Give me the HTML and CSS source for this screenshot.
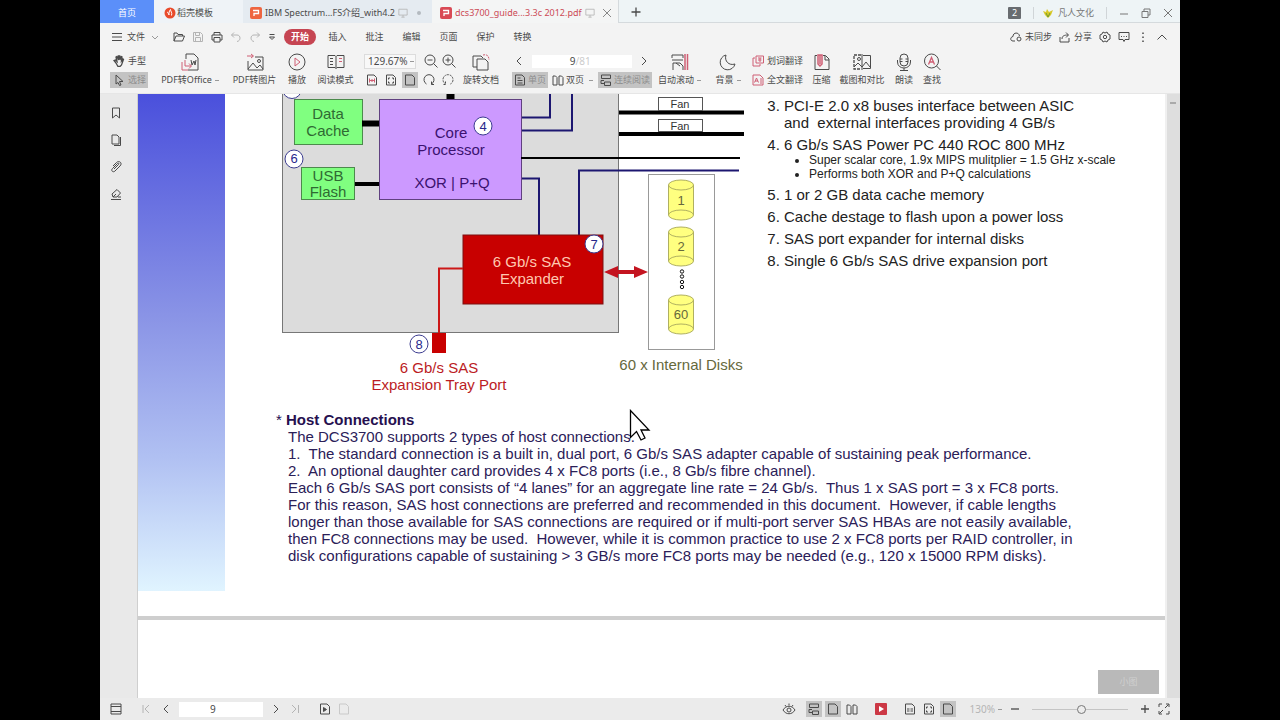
FILE: index.html
```html
<!DOCTYPE html>
<html lang="zh-CN">
<head>
<meta charset="utf-8">
<title>dcs3700_guide PDF</title>
<link rel="stylesheet" href="styles.css">
</head>
<body>
<svg width="0" height="0" class="defs" aria-hidden="true">
  <symbol id="doc" viewBox="0 0 12 12"><path d="M1.500 1h6.500l2.500 2.500v7.500h-9z"/></symbol>
  <symbol id="fit" viewBox="0 0 12 12"><path d="M1.500 1h6.500l2.500 2.500v7.500h-9z"/><path class="accent" d="M3.500 4.500v4M8.500 4.500v4M3.500 6.500h5M6 5v3"/></symbol>
  <symbol id="fitp" viewBox="0 0 12 12"><path d="M1.500 1h6.500l2.500 2.500v7.500h-9zM3.500 5.500v-1.500h1.500M8.500 7.500v1.500h-1.500M7 4h1.500v1.500M3.500 7.500v1.500h1.500"/></symbol>
  <symbol id="cw" viewBox="0 0 12 12"><path d="M3.500 10a5 5 0 1 1 5 0M8.500 7.500v3h2.500"/></symbol>
  <symbol id="ccw" viewBox="0 0 12 12"><path stroke-dasharray="2 1" d="M8.500 10a5 5 0 1 0-5 0M3.500 7.500v3h-2.500"/></symbol>
  <symbol id="book" viewBox="0 0 12 12"><path d="M1 2h2.500l1.500 1.500v7.500h-4zM7 2h2.500l1.500 1.500v7.500h-4z"/></symbol>
  <symbol id="cont" viewBox="0 0 12 12"><path d="M1.500 1h9v3.500h-9zM4 6.500H1v3h3M4.500 8h6v3.500h-6z"/></symbol>
  <symbol id="left" viewBox="0 0 8 12"><path d="M6 2 2 6l4 4"/></symbol>
  <symbol id="right" viewBox="0 0 8 12"><path d="m2 2 4 4-4 4"/></symbol>
  <symbol id="monitor" viewBox="0 0 12 12"><path d="M1 1.500h10v7H1zM4 11h4M6 8.500V11"/></symbol>
  <symbol id="pdf" viewBox="0 0 12 12"><rect width="12" height="12" rx="2" fill="currentColor" stroke="none"/><path stroke="#fff" stroke-width="1.300" d="M3 3.500h5.500v3H4v2.500"/></symbol>
</svg>
<div class="app">
  <header class="titlebar">
    <nav class="tabs">
      <button class="tab home">首页</button>
      <button class="tab docer"><svg class="i12" viewBox="0 0 12 12"><circle cx="6" cy="6" r="5.500" fill="#e94b2b" stroke="none"/><path d="M3 5c1 0 1.500 2 2 3 0-2 0-4 1.500-5.500 0 2 2 3 1 6" stroke="#fff"/></svg>稻壳模板</button>
      <button class="tab ibm"><svg class="i12 orange"><use href="#pdf"/></svg><span>IBM Spectrum...FS介绍_with4.2</span><svg class="i10 pale"><use href="#monitor"/></svg><i class="dot"></i></button>
      <button class="tab active"><svg class="i12 red"><use href="#pdf"/></svg><span>dcs3700_guide...3.3c 2012.pdf</span><svg class="i10 pale"><use href="#monitor"/></svg><svg class="i10 close" viewBox="0 0 10 10"><path d="m1 1 8 8M9 1 1 9"/></svg></button>
      <button class="plus" aria-label="新建"><svg class="i12" viewBox="0 0 12 12"><path stroke-width="1.300" d="M6 1.500v9M1.500 6h9"/></svg></button>
    </nav>
    <div class="window">
      <span class="badge">2</span><i class="sep"></i>
      <svg class="i12 crown" viewBox="0 0 12 12"><path d="m1 4 3 1 1-3 2 3 4-2-2 5-3 3-3-3z" fill="#d9c928" stroke="none"/><path d="m4 6 2 4 2-4" stroke="#6d9b35"/></svg>
      <span class="user">凡人文化</span><i class="sep"></i>
      <button aria-label="最小化"><svg class="i10" viewBox="0 0 10 10"><path d="M1 6h8"/></svg></button>
      <button aria-label="还原"><svg class="i10" viewBox="0 0 10 10"><path d="M1 3.500h6v6H1zM3 3.500V1h6v6H7"/></svg></button>
      <button aria-label="关闭"><svg class="i10" viewBox="0 0 10 10"><path d="m1 1 8 8M9 1 1 9"/></svg></button>
    </div>
  </header>

  <div class="menubar">
    <button class="file"><svg class="i12" viewBox="0 0 12 12"><path d="M1 2.500h10M1 6h10M1 9.500h10"/></svg>文件<svg class="i8" viewBox="0 0 8 8"><path d="m1 3 3 3 3-3"/></svg></button>
    <div class="quick">
      <button aria-label="打开"><svg class="i12" viewBox="0 0 12 12"><path d="M1 10V2h3l1 1.500h4.500V5M1 10l2-5h8.500l-2 5z"/></svg></button>
      <button aria-label="保存" class="pale"><svg class="i12" viewBox="0 0 12 12"><path d="M1.500 1.500h7l2 2v7h-9zM3.500 1.500v3h4v-3M3.500 10.500v-4h5v4"/></svg></button>
      <button aria-label="打印"><svg class="i12" viewBox="0 0 12 12"><path d="M3 4V1.500h6V4M3 9H1V4h10v5H9M3 6.500h6v4.500H3z"/></svg></button>
      <button aria-label="撤销" class="pale"><svg class="i12" viewBox="0 0 12 12"><path d="M4 1.500 1.500 4 4 6.500M1.500 4H7c4 0 4 6 0 6.500"/></svg></button>
      <button aria-label="重做" class="pale"><svg class="i12" viewBox="0 0 12 12"><path d="M8 1.500 10.500 4 8 6.500M10.500 4H5c-4 0-4 6 0 6.500"/></svg></button>
      <button aria-label="更多"><svg class="i8" viewBox="0 0 8 8"><path d="M1.500 1.500h5M1.500 4 4 6.500 6.500 4z"/></svg></button>
    </div>
    <nav class="menus">
      <button class="current">开始</button><button>插入</button><button>批注</button><button>编辑</button><button>页面</button><button>保护</button><button>转换</button>
    </nav>
    <div class="actions">
      <button><svg class="i12" viewBox="0 0 12 12"><path d="M5 10H3c-3 0-3-4 0-4.500C3 1 9 1 9.500 5M7 8a2 2 0 1 1 4 0 2 2 0 0 1-4 0"/></svg>未同步</button>
      <button><svg class="i12" viewBox="0 0 12 12"><path d="M1 6v5h9V7M3 8c0-3 2-4 6-4M7 1.500 9.500 4 7 6.500"/></svg>分享</button>
      <button aria-label="设置"><svg class="i12" viewBox="0 0 12 12"><path d="m4 1 2 1 2-1 1 2 2 1v4L9 9l-1 2-2-1-2 1-1-2-2-1V4l2-1z"/><circle cx="6" cy="6" r="1.700"/></svg></button>
      <button aria-label="反馈"><svg class="i12" viewBox="0 0 12 12"><path d="M1 1.500h10v7H7l-1 2-1-2H1zM3 5.500h1M5.500 5.500h1M8 5.500h1"/></svg></button>
      <button aria-label="菜单"><svg class="i12" viewBox="0 0 12 12"><path stroke-width="1.500" d="M6 1.500V3M6 5.500V7M6 9.500V11"/></svg></button>
      <button aria-label="收起"><svg class="i12" viewBox="0 0 12 12"><path d="m1.500 8.500 4.500-4.500 4.500 4.500"/></svg></button>
    </div>
  </div>

  <div class="toolbar">
    <div class="group modes">
      <button class="mini"><svg class="i12" viewBox="0 0 12 12"><path stroke-width="1.300" d="M3 8 1 5.500 2.500 5 4 6.500 3 2l1-.5L5.500 5V1h1l.5 4 1-3.500 1 .5-.5 4 1.500-2 .5.500-2 5.500-1.500 1.500H5z"/></svg>手型</button>
      <button class="mini on"><svg class="i12" viewBox="0 0 12 12"><path d="m3 1 7 6.500H6.500L8 11l-1.500.5L5 8.500 3 10z"/></svg><span class="dim">选择</span></button>
    </div>
    <button class="tool w64"><svg class="i18" viewBox="0 0 18 18"><path d="M5 6V1h8l4 4v12H7M10 7l1 5 2-4 1 4 1-5"/><path class="accent" d="M4 7v6h6M8 10.500l2.500 2.500L8 15.500M1 9v8h6"/></svg><span>PDF转Office<b></b></span></button>
    <button class="tool w65"><svg class="i18" viewBox="0 0 18 18"><path d="M9 4h8v13H2V8M2 16l5-6 4 5 3-3 3 4"/><circle cx="13" cy="8" r="1.500"/><path class="accent" d="M1 3h6M5 1l2.500 2L5 5"/></svg><span>PDF转图片</span></button>
    <button class="tool w20"><svg class="i18" viewBox="0 0 18 18"><circle cx="9" cy="9" r="8"/><path class="accent" d="m7 5 5 4-5 4z"/></svg><span>播放</span></button>
    <button class="tool w57"><svg class="i18" viewBox="0 0 18 18"><path d="M1 2.500h7l1 1 1-1h7v12h-7l-1 1-1-1H1zM9 3.500v12M3 5.500h3M3 8.500h3M3 11.500h3"/><path class="accent" d="M12 5.500h3M12 8.500h3"/></svg><span>阅读模式</span></button>
    <div class="group zoom">
      <div class="line">
        <select class="ratio" aria-label="缩放"><option>129.67%</option></select>
        <button aria-label="缩小"><svg class="i14" viewBox="0 0 14 14"><circle cx="6" cy="6" r="5"/><path d="M3.500 6h5M9.500 9.500 13.500 13.500"/></svg></button>
        <button aria-label="放大"><svg class="i14" viewBox="0 0 14 14"><circle cx="6" cy="6" r="5"/><path d="M3.500 6h5M6 3.500v5M9.500 9.500 13.500 13.500"/></svg></button>
      </div>
      <div class="line icons">
        <button aria-label="实际大小"><svg class="i12"><use href="#fit"/></svg></button>
        <button aria-label="适合页面"><svg class="i12"><use href="#fitp"/></svg></button>
        <button aria-label="适合宽度" class="on"><svg class="i12"><use href="#doc"/></svg></button>
        <button aria-label="顺时针"><svg class="i12"><use href="#cw"/></svg></button>
        <button aria-label="逆时针"><svg class="i12"><use href="#ccw"/></svg></button>
      </div>
    </div>
    <button class="tool w50"><svg class="i18" viewBox="0 0 18 18"><path d="M1 14V3h8l2 2M1 14h4M5 6h8l3 3v8H5z"/><path class="accent" stroke-dasharray="2 1" d="M11 2c4-1 6 1 6 5"/></svg><span>旋转文档</span></button>
    <div class="group pages">
      <div class="line pager">
        <button aria-label="上一页"><svg class="i12"><use href="#left"/></svg></button>
        <label class="pagebox"><input aria-label="页码" value="9"><span>/81</span></label>
        <button aria-label="下一页"><svg class="i12"><use href="#right"/></svg></button>
      </div>
      <div class="line views">
        <button class="mini on"><svg class="i12" viewBox="0 0 12 12"><path d="M1.500 1h6.500l2.500 2.500v7.500h-9zM3.500 4h3M3.500 6.500h5M3.500 9h5"/></svg><span class="dim">单页</span></button>
        <button class="mini"><svg class="i12"><use href="#book"/></svg>双页<b></b></button>
        <button class="mini on"><svg class="i12"><use href="#cont"/></svg><span class="dim">连续阅读</span></button>
      </div>
    </div>
    <button class="tool w55"><svg class="i18" viewBox="0 0 18 18"><path d="M1 5V2h11v3M1 7h11M2 17V10h7l3 3v4M5 10l4 3"/><path class="accent" stroke-width="1.500" d="M14 1v16M16.500 1v16"/></svg><span>自动滚动<b></b></span></button>
    <button class="tool w42"><svg class="i18" viewBox="0 0 18 18"><path d="M7 2a7.500 7.500 0 1 0 9 9C10 13 5 8 7 2z"/></svg><span>背景<b></b></span></button>
    <div class="group translate">
      <button class="mini"><svg class="i12 accent" viewBox="0 0 12 12"><path d="M3 3H1v8h7V9M4 1h7.500v7H4zM6 3h3.500M6 5h3.500M8 3v4"/></svg>划词翻译</button>
      <button class="mini"><svg class="i12 accent" viewBox="0 0 12 12"><path d="M1 1h7l3 3v7H1zM2.500 8.500 4.500 4l2 4.500M3 7h3M8 5h2M8 7h2M8 9h2"/></svg>全文翻译</button>
    </div>
    <button class="tool w31"><svg class="i18" viewBox="0 0 18 18"><path d="M4 2.500H2v14h14V6l-3.500-3.500H10M12 3v4h4"/><path class="accent" stroke-width="1.500" d="M5 2h4v9l-2 2-2-2zM7 2v9"/></svg><span>压缩</span></button>
    <button class="tool w50"><svg class="i18" viewBox="0 0 18 18"><path stroke-width="1.300" stroke-dasharray="3 1" d="M8 2H1v14h7"/><path d="M10 2.500h7.500v13H10M9 1v16M1 14l4-4 4 4 4-5 4 5"/><circle cx="6" cy="6" r="1.500"/></svg><span>截图和对比</span></button>
    <button class="tool w34"><svg class="i18" viewBox="0 0 18 18"><rect x="5" y="1" width="8" height="12" rx="4"/><path d="M2.500 7v2c0 8 13 8 13 0V7M9 15v2.500M5 17.500h8M5 6h2.500M10.500 6H13M5 8.500h2.500M10.500 8.500H13"/></svg><span>朗读</span></button>
    <button class="tool w22"><svg class="i18" viewBox="0 0 18 18"><circle cx="8.500" cy="8" r="7"/><path d="m13.500 13 4 4"/><path class="accent" stroke-width="1.300" d="m5.500 11.500 3-7 3 7M6.500 9h4"/></svg><span>查找</span></button>
  </div>

  <div class="workspace">
    <aside class="sidebar">
      <button aria-label="书签"><svg class="i12" viewBox="0 0 12 12"><path d="M2.500 1h7v10L6 8l-3.500 3z"/></svg></button>
      <button aria-label="缩略图"><svg class="i12" viewBox="0 0 12 12"><path d="M2 1h5l2 2v7H2zM10.500 3v8.500H4"/></svg></button>
      <button aria-label="附件"><svg class="i12" viewBox="0 0 12 12"><path d="m4 8 4.500-4.500c1-1 0-2-1-1L2.500 7.500c-2 2 .500 4.500 2.500 2.500L10 5c3-3-1-6-3.500-3.500L3 5"/></svg></button>
      <button aria-label="签名"><svg class="i12" viewBox="0 0 12 12"><path d="M1 11.500h10M3 9l-1-3 5-4.500 3.500 3.500L7 9zM3 9l3-3M8 9h3"/></svg></button>
    </aside>
    <main class="viewer">
      <article class="page">
        <div class="band"></div>
        <div class="body">
          <div class="upper">
            <svg class="diagram" viewBox="276 94 480 312" role="img" aria-label="Controller block diagram">
              <rect x="282.500" y="80" width="336" height="252.500" fill="#dcdcdc" stroke="#777"/>
              <g class="tag"><circle cx="292" cy="89" r="9.500"/><circle cx="294" cy="159" r="9"/><text x="294" y="163">6</text></g>
              <g fill="#80ff80" stroke="#4c8a4c"><rect x="294.500" y="99.500" width="68" height="45"/><rect x="301.500" y="167.500" width="53" height="32"/></g>
              <path d="M362 123.500h17" stroke="#000" stroke-width="6"/><path d="M355 184h24" stroke="#000" stroke-width="4"/><path d="M450.500 94v6" stroke="#000" stroke-width="8"/>
              <rect x="379.500" y="99.500" width="142" height="100" fill="#cc99ff" stroke="#604080"/>
              <g class="label green"><text x="328" y="119">Data</text><text x="328" y="136">Cache</text><text x="328" y="181">USB</text><text x="328" y="197">Flash</text></g>
              <g class="label purple"><text x="451" y="138">Core</text><text x="451" y="155">Processor</text><text x="452" y="188">XOR | P+Q</text></g>
              <g class="wire"><path d="M522 117.500h28V94M522 130.500h50V94M522 178.500h17V236M579 236v-65.500h160"/></g>
              <path d="M521 158h219" stroke="#000" stroke-width="2"/>
              <path d="M619 112.500h125M619 134h125" stroke="#000" stroke-width="4"/>
              <g fill="#fff" stroke="#555"><rect x="658.500" y="97.500" width="44" height="13"/><rect x="658.500" y="119.500" width="44" height="12"/></g>
              <g class="fan"><text x="680" y="108">Fan</text><text x="680" y="130">Fan</text></g>
              <rect x="463" y="235" width="140" height="69" fill="#c80000" stroke="#7c1010"/>
              <g class="label cream"><text x="532" y="267">6 Gb/s SAS</text><text x="532" y="284">Expander</text></g>
              <path d="M463 268.500h-24V334" stroke="#cc1818" stroke-width="2"/>
              <rect x="432" y="333" width="14" height="20" fill="#c80000"/>
              <g class="tag"><circle cx="483" cy="126" r="9"/><text x="483" y="131">4</text><circle cx="594" cy="244" r="9"/><text x="594" y="249">7</text><circle cx="419" cy="344" r="9"/><text x="419" y="349">8</text></g>
              <path d="M604 272l14-6v4h16v-4l14 6-14 6v-4h-16v4z" fill="#c41420"/>
              <rect x="648.500" y="174.500" width="66" height="175" fill="#fff" stroke="#999"/>
              <g class="disk">
                <path d="M668.500 185v30a12.500 5 0 0 0 25 0v-30a12.500 5 0 0 0-25 0a12.500 5 0 0 0 25 0M693.500 215a12.500 5 0 0 0-25 0"/>
                <path d="M668.500 232v29a12.500 5 0 0 0 25 0v-29a12.500 5 0 0 0-25 0a12.500 5 0 0 0 25 0M693.500 261a12.500 5 0 0 0-25 0"/>
                <path d="M668.500 300v29a12.500 5 0 0 0 25 0v-29a12.500 5 0 0 0-25 0a12.500 5 0 0 0 25 0M693.500 329a12.500 5 0 0 0-25 0"/>
                <text x="681" y="205">1</text><text x="681" y="251">2</text><text x="681" y="319">60</text>
              </g>
              <g fill="#fff" stroke="#111"><circle cx="682" cy="271.500" r="1.700"/><circle cx="682" cy="276.500" r="1.700"/><circle cx="682" cy="282" r="1.700"/><circle cx="682" cy="287" r="1.700"/></g>
              <g class="label redtext"><text x="439" y="373">6 Gb/s SAS</text><text x="439" y="390">Expansion Tray Port</text></g>
              <text class="label olive" x="681" y="370">60 x Internal Disks</text>
            </svg>
            <ol class="facts" start="3">
              <li>PCI-E 2.0 x8 buses interface between ASIC<br>and&nbsp; external interfaces providing 4 GB/s</li>
              <li>6 Gb/s SAS Power PC 440 ROC 800 MHz
                <ul><li>Super scalar core, 1.9x MIPS mulitplier = 1.5 GHz x-scale</li><li>Performs both XOR and P+Q calculations</li></ul></li>
              <li>1 or 2 GB data cache memory</li>
              <li>Cache destage to flash upon a power loss</li>
              <li>SAS port expander for internal disks</li>
              <li>Single 6 Gb/s SAS drive expansion port</li>
            </ol>
          </div>
          <section class="notes">
            <h2><span>*</span> Host Connections</h2>
            <p>The DCS3700 supports 2 types of host connections.<br>
            1.&nbsp; The standard connection is a built in, dual port, 6 Gb/s SAS adapter capable of sustaining peak performance.<br>
            2.&nbsp; An optional daughter card provides 4 x FC8 ports (i.e., 8 Gb/s fibre channel).<br>
            Each 6 Gb/s SAS port consists of “4 lanes” for an aggregate line rate = 24 Gb/s.&nbsp; Thus 1 x SAS port = 3 x FC8 ports.<br>
            For this reason, SAS host connections are preferred and recommended in this document.&nbsp; However, if cable lengths<br>
            longer than those available for SAS connections are required or if multi-port server SAS HBAs are not easily available,<br>
            then FC8 connections may be used.&nbsp; However, while it is common practice to use 2 x FC8 ports per RAID controller, in<br>
            disk configurations capable of sustaining &gt; 3 GB/s more FC8 ports may be needed (e.g., 120 x 15000 RPM disks).</p>
          </section>
        </div>
        <svg class="cursor" viewBox="0 0 22 34"><path d="M1.500 1.500v27l6-6 4.500 8.500 4-2-4-8h8z" fill="#fff" stroke="#000" stroke-width="1.300"/></svg>
      </article>
      <div class="page next"></div>
      <button class="float">小图</button>
    </main>
    <div class="scroll"><i></i></div>
  </div>

  <footer class="status">
    <button aria-label="侧栏"><svg class="i12" viewBox="0 0 12 12"><path d="M1 1h10v10H1zM1 3.500h10M1 8.500h10"/></svg></button>
    <div class="spage">
      <button aria-label="首页" class="pale"><svg class="i12" viewBox="0 0 12 12"><path d="M2 2v8M8 2 4 6l4 4"/></svg></button>
      <button aria-label="上一页"><svg class="i12"><use href="#left"/></svg></button>
      <input aria-label="当前页" value="9">
      <button aria-label="下一页"><svg class="i12"><use href="#right"/></svg></button>
      <button aria-label="末页" class="pale"><svg class="i12" viewBox="0 0 12 12"><path d="m3 2 4 4-4 4M9.500 2v8"/></svg></button>
    </div>
    <button aria-label="后退"><svg class="i12" viewBox="0 0 12 12"><path d="M1.500 1h6.500l2.500 2.500v7.500h-9z"/><path d="m4.500 4.500 3 2-3 2z" fill="currentColor"/></svg></button>
    <button aria-label="前进" class="pale faint"><svg class="i12"><use href="#doc"/></svg></button>
    <div class="right">
      <button aria-label="护眼" class="eye"><svg class="i14" viewBox="0 0 14 14"><path d="M1 8c3-5 9-5 12 0-3 5-9 5-12 0zM3 3l1 1.500M7 1.500V3.500M11 3l-1 1.500"/><circle cx="7" cy="8" r="2"/></svg></button>
      <div class="set">
        <button aria-label="连续" class="on"><svg class="i12"><use href="#cont"/></svg></button>
        <button aria-label="单页" class="on"><svg class="i12"><use href="#doc"/></svg></button>
        <button aria-label="双页"><svg class="i12"><use href="#book"/></svg></button>
      </div>
      <button aria-label="播放" class="play"><svg class="i12" viewBox="0 0 12 12"><rect width="12" height="12" rx="1" fill="#cc3845" stroke="none"/><path d="m4 3 5 3-5 3z" fill="#fff" stroke="none"/></svg></button>
      <div class="set">
        <button aria-label="实际大小"><svg class="i12" viewBox="0 0 12 12"><path d="M1.500 1h6.500l2.500 2.500v7.500h-9zM4 5v4M8 5v4M6 5.500v1M6 7.500v1"/></svg></button>
        <button aria-label="适合页面"><svg class="i12"><use href="#fitp"/></svg></button>
        <button aria-label="适合宽度" class="on"><svg class="i12"><use href="#doc"/></svg></button>
      </div>
      <button class="percent">130%<b></b></button>
      <button aria-label="缩小"><svg class="i10" viewBox="0 0 10 10"><path stroke-width="1.300" d="M1 5h8"/></svg></button>
      <input type="range" aria-label="缩放比例" min="0" max="100" value="52">
      <button aria-label="放大"><svg class="i10" viewBox="0 0 10 10"><path stroke-width="1.300" d="M1 5h8M5 1v8"/></svg></button>
      <button aria-label="全屏"><svg class="i12" viewBox="0 0 12 12"><path d="M1 4V1h3M8 1h3v3M11 8v3H8M4 11H1V8M7 5l3.500-3.500M5 7l-3.500 3.500"/></svg></button>
    </div>
  </footer>
</div>
</body>
</html>
```

FILE: styles.css
```css
* { box-sizing: border-box; }
body {
  margin: 0;
  background: #000;
  color: #4a4a4a;
  font: 9px/12px "Noto Sans", "Noto Sans CJK SC", sans-serif;
}
button, input, select { font: inherit; color: inherit; border: 0; background: none; padding: 0; margin: 0; white-space: nowrap; }
button { display: flex; align-items: center; justify-content: center; flex: none; }
svg { fill: none; stroke: currentColor; flex: none; display: block; }
.defs { position: absolute; }
.i8 { width: 8px; height: 8px; }
.i10 { width: 10px; height: 10px; }
.i12 { width: 12px; height: 12px; }
.i14 { width: 14px; height: 14px; }
.i18 { width: 18px; height: 18px; }
.accent { stroke: #cf5f74; }
.pale { color: #b4b4b4; }
.on { background: #c3c3c3; }
.dim { color: #8d8d8d; }
b { display: inline-block; width: 4px; height: 1px; background: #999; margin-left: 3px; vertical-align: middle; }

.app { margin: 0 100px; height: 100vh; display: flex; flex-direction: column; background: #f3f3f3; overflow: hidden; }

.titlebar { height: 23px; display: flex; justify-content: space-between; background: #eef4f6; border-bottom: 1px solid #d5dadd; flex: none; }
.tabs { display: flex; height: 23px; }
.tab { padding-top: 3px; }
.home { width: 54px; background: #5b8ff9; color: #fff; }
.docer { width: 89px; justify-content: flex-start; padding-left: 10px; gap: 1px; background: #eff3f7; }
.ibm { width: 189px; gap: 3px; background: #e5ebf1; justify-content: flex-start; padding-left: 7px; }
.active { width: 187px; gap: 3px; background: #f4f5f5; color: #cc4b55; justify-content: flex-start; padding-left: 8px; border-right: 1px solid #d5dadd; }
.tab span { flex: none; }
.orange { color: #ee6540; }
.red { color: #d94a55; }
.close { color: #888; margin-left: 4px; }
.dot { width: 4px; height: 4px; border-radius: 50%; background: #b4bac0; margin-left: 6px; }
.plus { width: 34px; }
.window { display: flex; align-items: center; gap: 12px; padding: 4px 7px 0 0; color: #777; }
.badge { width: 13px; height: 12px; background: #686c70; color: #fff; border-radius: 1px; text-align: center; }
.sep { width: 1px; height: 12px; background: #d0d5d8; }
.crown { margin-right: -8px; margin-left: -4px; }

.menubar { height: 27px; display: flex; align-items: center; padding: 0 12px 0 11px; flex: none; }
.file { gap: 4px; }
.file .i8 { margin-left: 2px; color: #999; }
.quick { display: flex; gap: 7px; margin-left: 14px; }
.menus { display: flex; margin-left: 8px; }
.menus button { width: 37px; height: 16px; }
.menus .current { width: 32px; margin-right: 3px; border-radius: 8px; background: #c64552; color: #fff; font-weight: bold; }
.actions { margin-left: auto; display: flex; gap: 7px; }
.actions button { gap: 3px; }

.toolbar { height: 43px; display: flex; flex: none; padding-top: 3px; }
.tool { flex-direction: column; justify-content: flex-start; gap: 3px; height: 36px; overflow: visible; }
.tool span, .mini { line-height: 12px; }
.w20 { width: 20px; } .w22 { width: 22px; } .w31 { width: 31px; } .w34 { width: 34px; } .w42 { width: 42px; }
.w50 { width: 50px; } .w55 { width: 55px; } .w57 { width: 57px; } .w64 { width: 64px; } .w65 { width: 65px; }
.group { flex: none; display: flex; flex-direction: column; gap: 3px; }
.mini { height: 16px; gap: 3px; padding: 0 3px; justify-content: flex-start; }
.modes { width: 58px; padding-left: 10px; align-items: flex-start; }
.modes .mini { width: 38px; }
.line { display: flex; align-items: center; height: 16px; }
.zoom { width: 92px; }
.zoom .line { gap: 4px; }
.ratio { width: 52px; height: 15px; padding-left: 3px; font-size: 10px; background: linear-gradient(#999, #999) 45px 6px / 4px 1px no-repeat #f8f8f8; border: 1px solid #dcdcdc; appearance: none; margin-right: 4px; }
.zoom .icons { gap: 3px; }
.icons button { width: 16px; height: 16px; }
.pages { width: 146px; }
.pager { justify-content: space-between; padding: 0 2px 0 7px; }
.pagebox { width: 100px; height: 13px; background: #fff; display: flex; align-items: center; font-size: 10px; }
.pagebox input { width: 44px; height: 12px; text-align: right; }
.pagebox span { color: #ccc; }
.views { gap: 2px; padding-left: 6px; }
.views .mini { padding: 0 2px; gap: 2px; }
.views .mini:last-child { margin-left: auto; }
.translate { width: 57px; }

.workspace { flex: 1; display: flex; min-height: 0; border-top: 1px solid #e6e6e6; }
.sidebar { width: 38px; flex: none; background: #e9e9e9; border-right: 1px solid #cfcfcf; display: flex; flex-direction: column; gap: 15px; padding: 13px 0 0 10px; }
.sidebar button { width: 12px; height: 12px; }
.viewer { flex: 1; min-width: 0; display: flex; flex-direction: column; gap: 4px; background: #cecece; overflow: hidden; position: relative; }
.page { background: #fff; display: flex; flex: none; position: relative; padding-bottom: 25px; color: #222; font-family: "Liberation Sans", Arial, sans-serif; }
.next { flex: 1; min-height: 0; }
.band { width: 87px; min-height: 497px; flex: none; background: linear-gradient(#4a50dc, #8a94e6 45%, #b0c0f2 73%, #e0f4ff); }
.body { flex: 1; min-width: 0; padding-left: 51px; }
.upper { display: flex; }
.diagram { width: 480px; height: 312px; stroke: none; flex: none; }
.diagram text { stroke: none; text-anchor: middle; }
.label { font-size: 15px; stroke: none; }
.green { fill: #2f6a33; }
.purple { fill: #3b1270; }
.cream { fill: #ffc8b0; }
.redtext { fill: #bb1c24; }
.olive { fill: #66683c; }
.fan { font-size: 11px; fill: #333; }
.wire { stroke: #1c1670; stroke-width: 2; }
.tag circle { fill: #fff; stroke: #3c3c90; }
.tag text { font-size: 13px; fill: #28288c; }
.disk path { fill: #ffff80; stroke: #b0b060; }
.disk text { font-size: 13px; fill: #66683c; }
.facts { margin: 3px 0 0; padding-left: 28px; font-size: 15px; line-height: 17px; white-space: nowrap; }
.facts > li { margin-bottom: 5px; }
.facts ul { margin: 0; padding-left: 25px; font-size: 12px; line-height: 14px; list-style: disc; }
.notes { margin-top: 5px; font-size: 15px; line-height: 17px; color: #2b2058; white-space: nowrap; }
.notes h2 { margin: 0; font-size: 15px; color: #26104f; }
.notes h2 span { font-weight: normal; }
.notes p { margin: 0 0 0 12px; }
.cursor { position: absolute; left: 491px; top: 315px; width: 22px; height: 34px; }
.float { position: absolute; right: 6px; bottom: 4px; width: 61px; height: 24px; background: #b9b9b9; color: #cfcfcf; }
.scroll { width: 15px; flex: none; background: #dedede; border-left: 2px solid #f0f0f0; padding: 8px 3px; }
.scroll i { display: block; height: 2px; background: #aaa; width: 6px; }

.status { height: 22px; flex: none; display: flex; align-items: center; background: #ebebeb; padding: 0 10px; }
.spage { display: flex; align-items: center; gap: 7px; margin: 0 18px 0 19px; }
.spage input { width: 84px; height: 15px; background: #fff; padding-left: 31px; font-size: 10px; }
.faint { opacity: 0.6; margin-left: 7px; }
.right { margin-left: auto; display: flex; align-items: center; gap: 8px; }
.set { display: flex; gap: 3px; }
.set button { width: 16px; height: 16px; }
.right .eye { margin-right: 2px; }
.play { margin: 0 7px; }
.percent { color: #b5b5b5; font-size: 10px; margin-left: 6px; }
input[type="range"] { appearance: none; width: 96px; height: 12px; margin: 0 4px; background: linear-gradient(#c4c4c4, #c4c4c4) center / 100% 1px no-repeat; }
input[type="range"]::-webkit-slider-thumb { appearance: none; width: 9px; height: 9px; border: 1px solid #777; border-radius: 50%; background: #ececec; }
```
